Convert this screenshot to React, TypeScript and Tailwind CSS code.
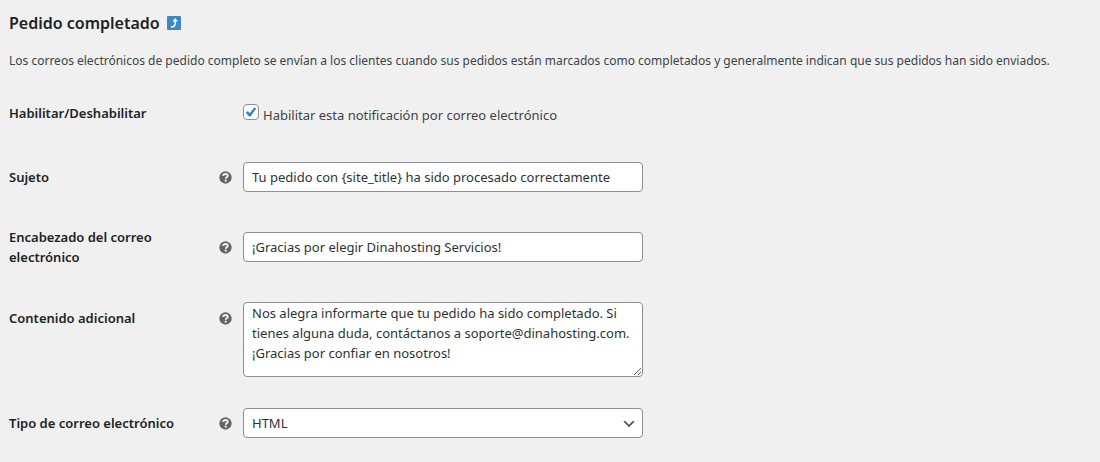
import type { ReactNode } from 'react'

interface FieldRowProps {
  id: string
  label: string
  help?: boolean
  className?: string
  children: ReactNode
}

const fieldClass =
  'w-full rounded border border-[#8c8f94] bg-white px-2 text-[13px] leading-5 text-[#2c3338] outline-none focus:border-[#2271b1]'

function HelpTip() {
  return (
    <svg viewBox="0 0 20 20" className="size-[13px] shrink-0" aria-hidden="true">
      <circle cx="10" cy="10" r="9.5" fill="#646464" />
      <path
        d="M6.4 7.7C6.6 5.6 8 4.6 10 4.6c2.1 0 3.5 1 3.5 2.7 0 2.4-3.1 2.2-3.1 4.7"
        fill="none"
        stroke="#f0f0f0"
        strokeWidth="2.9"
      />
      <circle cx="10.3" cy="14.9" r="1.7" fill="#f0f0f0" />
    </svg>
  )
}

function FieldRow({ id, label, help = true, className = 'min-h-[70px] items-center', children }: FieldRowProps) {
  return (
    <div className={`flex ${className}`}>
      <div className="flex w-[234px] shrink-0 items-center justify-between pr-[11px]">
        <label htmlFor={id} className="max-w-[180px] text-[13px] leading-5 font-semibold text-[#1d2327]">
          {label}
        </label>
        {help && <HelpTip />}
      </div>
      <div className="w-full max-w-[400px]">{children}</div>
    </div>
  )
}

export default function App() {
  return (
    <main className="min-h-screen bg-[#f0f0f0] px-[9px] pt-3 pb-1 font-['Noto_Sans','Open_Sans',sans-serif] text-[#3c434a]">
      <h2 className="flex items-center gap-[7px] text-base leading-[22px] font-semibold text-[#1d2327]">
        Pedido completado
        <a href="#correos" aria-label="Volver a los correos electrónicos">
          <svg viewBox="0 0 14 14" className="size-[14px]" aria-hidden="true">
            <rect width="14" height="14" rx="1" fill="#3b88c6" />
            <path d="M3.8 11c2.8 0 4.4-1 4.4-3.5V4.5" fill="none" stroke="#fff" strokeWidth="1.5" />
            <path d="M8.2 2 10.9 5.4H5.5z" fill="#fff" />
          </svg>
        </a>
      </h2>
      <p className="mt-[17px] text-xs leading-5">
        Los correos electrónicos de pedido completo se envían a los clientes cuando sus pedidos están marcados como
        completados y generalmente indican que sus pedidos han sido enviados.
      </p>

      <form className="mt-[13px]">
        <FieldRow id="enabled" label="Habilitar/Deshabilitar" help={false} className="min-h-[58px] items-center">
          <label className="flex items-start gap-1 pt-1 text-[13px] leading-[22px]">
            <span className="relative size-4 shrink-0">
              <input
                id="enabled"
                type="checkbox"
                defaultChecked
                className="peer block size-4 appearance-none rounded border border-[#8c8f94] bg-white"
              />
              <svg
                viewBox="0 0 16 16"
                className="pointer-events-none absolute inset-0 hidden size-4 peer-checked:block"
                aria-hidden="true"
              >
                <path d="M2.8 8.4 5 7l1.7 2.2L11.4 3.2l1.8 1.2-5.7 8.2H5.9z" fill="#3582c4" />
              </svg>
            </span>
            Habilitar esta notificación por correo electrónico
          </label>
        </FieldRow>
        <FieldRow id="subject" label="Sujeto">
          <input
            id="subject"
            type="text"
            defaultValue="Tu pedido con {site_title} ha sido procesado correctamente"
            className={`block h-[30px] ${fieldClass}`}
          />
        </FieldRow>
        <FieldRow id="heading" label="Encabezado del correo electrónico">
          <input
            id="heading"
            type="text"
            defaultValue="¡Gracias por elegir Dinahosting Servicios!"
            className={`block h-[30px] ${fieldClass}`}
          />
        </FieldRow>
        <FieldRow id="additional" label="Contenido adicional" className="items-start pt-5 pb-[11px] *:first:pt-[6px]">
          <textarea
            id="additional"
            defaultValue={
              'Nos alegra informarte que tu pedido ha sido completado. Si tienes alguna duda, contáctanos a soporte@dinahosting.com. ¡Gracias por confiar en nosotros!'
            }
            className={`block h-[75px] resize ${fieldClass}`}
          />
        </FieldRow>
        <FieldRow id="email_type" label="Tipo de correo electrónico">
          <div className="relative">
            <select id="email_type" defaultValue="html" className={`block h-[30px] appearance-none ${fieldClass}`}>
              <option value="plain">Texto sin formato</option>
              <option value="html">HTML</option>
              <option value="multipart">Multiparte</option>
            </select>
            <svg
              viewBox="0 0 20 20"
              className="pointer-events-none absolute top-2 right-1.5 size-4"
              aria-hidden="true"
            >
              <path d="m5 6 5 5 5-5 2 1-7 7-7-7 2-1z" fill="#555" />
            </svg>
          </div>
        </FieldRow>
      </form>
    </main>
  )
}
